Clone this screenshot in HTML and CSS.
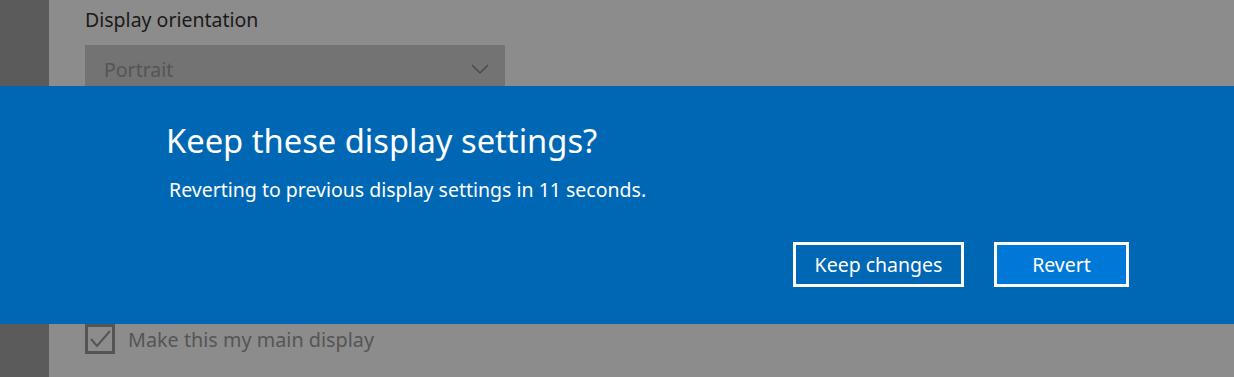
FILE: index.html
```html
<!DOCTYPE html>
<html>
<head>
	<title>Display settings</title>
	<meta charset="UTF-8">
	<link rel="stylesheet" href="styles.css">
</head>
<body>
	<div id="page">
		<div id="sidebar"></div>
		<div id="content">
			<div class="label">Display orientation</div>
			<div class="dropdown">
				<span>Portrait</span>
				<svg class="chevron" width="18" height="10" viewBox="0 0 18 10">
					<path d="M1 1 L9 9 L17 1" fill="none" stroke="#4a4a4a" stroke-width="1.5"/>
				</svg>
			</div>
			<div class="hidden-area"></div>
			<label class="check">
				<span class="box">
					<svg width="24" height="24" viewBox="0 0 24 24">
						<path d="M3 12 L9 19 L22 4" fill="none" stroke="#555" stroke-width="2"/>
					</svg>
				</span>
				<span>Make this my main display</span>
			</label>
		</div>
	</div>

	<!-- confirm banner, lies over the settings page -->
	<div id="banner">
		<div class="banner-text">
			<h1>Keep these display settings?</h1>
			<p>Reverting to previous display settings in 11 seconds.</p>
		</div>
		<div class="buttons">
			<button class="keep">Keep changes</button>
			<button class="revert">Revert</button>
		</div>
	</div>
</body>
</html>
```

FILE: styles.css
```css
body {
	margin: 0;
	font-family: "Noto Sans", "Open Sans", sans-serif;
	background-color: #8c8c8c;
	height: 377px;
	overflow: hidden;
}

#page {
	display: flex;
	height: 377px;
}

#sidebar {
	width: 49px;
	background-color: #5b5b5b;
}

#content {
	padding-left: 36px;
	padding-top: 8px;
}

.label {
	font-size: 19.5px;
	color: #1a1a1a;
	line-height: 24px;
}

.dropdown {
	margin-top: 13px;
	width: 420px;
	height: 48px;
	background-color: #737373;
	display: flex;
	align-items: center;
	justify-content: space-between;
	box-sizing: border-box;
	padding: 0 16px 0 19px;
	color: #555;
	font-size: 19.5px;
}

.hidden-area {
	height: 231px;
}

.check {
	display: flex;
	align-items: center;
	gap: 13px;
	font-size: 19.8px;
	color: #555;
}

.check .box {
	width: 30px;
	height: 30px;
	box-sizing: border-box;
	border: 3px solid #555;
	display: flex;
	align-items: center;
	justify-content: center;
}

#banner {
	position: absolute;
	left: 0;
	top: 86px;
	width: 100%;
	height: 238px;
	background-color: #0067b4;
	color: white;
	box-sizing: border-box;
	padding: 35px 105px 0 166px;
}

h1 {
	margin: 0;
	font-weight: normal;
	font-size: 32.7px;
	line-height: 40px;
}

p {
	margin: 15px 0 0 3px;
	font-size: 19.5px;
}

.buttons {
	display: flex;
	justify-content: flex-end;
	gap: 30px;
	margin-top: 39px;
}

button {
	height: 45px;
	border: 3px solid white;
	color: white;
	font: 19.5px "Noto Sans", "Open Sans", sans-serif;
	background-color: transparent;
	cursor: pointer;
}

button.keep {
	width: 171px;
}

button.revert {
	width: 135px;
	background-color: #0078d7;
}
```
